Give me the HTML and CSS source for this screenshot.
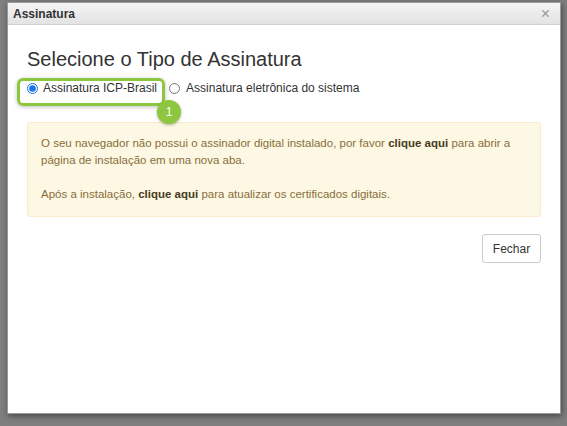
FILE: index.html
```html
<!DOCTYPE html>
<html lang="pt-BR">
<head>
    <meta charset="UTF-8">
    <title>Assinatura</title>
    <link rel="stylesheet" href="styles.css">
</head>
<body>
    <div class="dialog">
        <div class="dialog-header">
            <span class="dialog-title">Assinatura</span>
            <span class="close">&times;</span>
        </div>
        <div class="dialog-body">
            <h2>Selecione o Tipo de Assinatura</h2>
            <div class="radios">
                <label class="radio highlighted">
                    <input type="radio" name="tipo" checked> Assinatura ICP-Brasil
                    <span class="badge">1</span>
                </label>
                <label class="radio">
                    <input type="radio" name="tipo"> Assinatura eletrônica do sistema
                </label>
            </div>
            <div class="alert">
                <p>O seu navegador não possui o assinador digital instalado, por favor <b>clique aqui</b> para abrir a página de instalação em uma nova aba.</p>
                <p>Após a instalação, <b>clique aqui</b> para atualizar os certificados digitais.</p>
            </div>
            <div class="footer">
                <button>Fechar</button>
            </div>
        </div>
    </div>
</body>
</html>
```

FILE: styles.css
```css
body { margin: 0; padding-top: 2px; background: #7f7f7f; font-family: "Liberation Sans", Arial, sans-serif; color: #333; height: 424px; overflow: hidden; }
.dialog { margin-left: 7px; width: 554px; height: 412px; background: #fff; box-shadow: 1px 2px 6px rgba(0,0,0,0.45); border: 1px solid #9a9a9a; box-sizing: border-box; }
.dialog-header { height: 21px; display: flex; align-items: center; justify-content: space-between; padding: 0 10px 0 5px; background: linear-gradient(#f4f4f4, #e3e3e3); border-bottom: 1px solid #cfcfcf; }
.dialog-title { font-size: 12px; font-weight: bold; color: #333; }
.close { font-size: 16px; color: #999; line-height: 1; }
.dialog-body { padding: 0 19px; }
h2 { margin: 22px 0 0; font-size: 20px; font-weight: normal; color: #333; line-height: 24px; }
.radios { display: flex; align-items: center; margin-top: 8px; font-size: 12px; height: 18px; }
.radio { display: flex; align-items: center; }
.radio input { margin: 0 5px 0 0; width: 11px; height: 11px; accent-color: #1a73e8; }
.radio + .radio input { margin-right: 6px; }
.highlighted { position: relative; margin-right: 12px; }
.highlighted::before { content: ""; position: absolute; left: -10px; top: -3px; width: 148px; height: 28px; box-sizing: border-box; border: 3px solid #8dc63f; border-radius: 6px; box-shadow: 0 1px 4px rgba(0,0,0,0.25); }
.badge { position: absolute; left: 130px; top: 19px; width: 24px; height: 24px; border-radius: 50%; background: #8dc63f; color: #fff; font-size: 12px; display: flex; align-items: center; justify-content: center; box-shadow: 0 1px 3px rgba(0,0,0,0.3); }
.alert { margin-top: 25px; padding: 12px 13px 13px; background: #fcf8e3; border: 1px solid #faebcc; border-radius: 3px; color: #8a6d3b; font-size: 11.5px; line-height: 17px; }
.alert p { margin: 0; }
.alert p + p { margin-top: 17px; }
.alert b { color: #4a3a1c; }
.footer { display: flex; justify-content: flex-end; margin-top: 17px; }
button { font-family: inherit; font-size: 12px; color: #333; background: #fff; border: 1px solid #ccc; border-radius: 3px; width: 59px; height: 29px; padding: 0; }
```
